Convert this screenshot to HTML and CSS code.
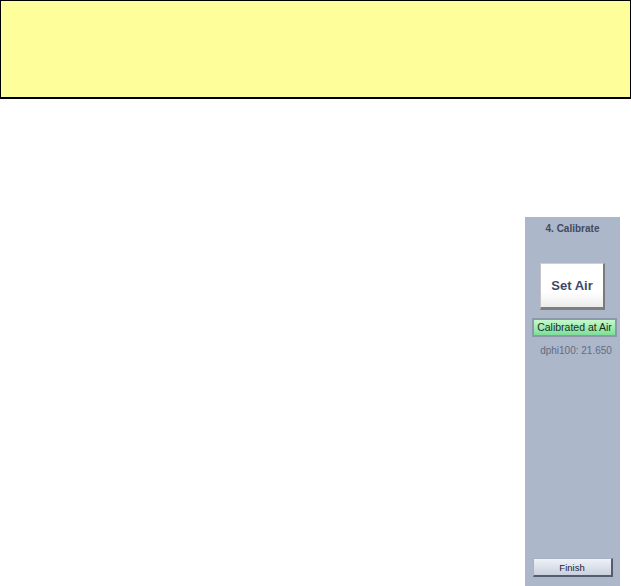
FILE: index.html
```html
<!DOCTYPE html>
<html lang="en">
<head>
    <meta charset="UTF-8">
    <title>Calibrate</title>
    <link rel="stylesheet" href="styles.css">
</head>
<body>
    <div class="notice"></div>
    <div class="side">
        <div class="panel">
            <p class="panel-title">4. Calibrate</p>
            <button class="set-air">Set Air</button>
            <div class="status">Calibrated at Air</div>
            <p class="reading">dphi100: 21.650</p>
            <button class="finish">Finish</button>
        </div>
    </div>
</body>
</html>
```

FILE: styles.css
```css
*{
    margin:0;
    padding:0;
    box-sizing: border-box;
}
body{
    background-color: white;
    font-family: "Liberation Sans", Arial, sans-serif;
}
.notice{
    width: 631px;
    height: 99px;
    background-color: #fefe9a;
    border: 1px solid black;
    border-bottom-width: 2px;
}
.side{
    display: flex;
    justify-content: flex-end;
    padding-right: 11px;
    margin-top: 118px;
}
.panel{
    width: 95px;
    height: 369px;
    background-color: #adb7ca;
    display: flex;
    flex-direction: column;
    align-items: center;
}
.panel-title{
    font-size: 10px;
    font-weight: bold;
    color: #414a5e;
    line-height: 13px;
    margin-top: 5px;
}
.set-air{
    width: 65px;
    height: 47px;
    margin-top: 28px;
    font-family: "Liberation Sans", Arial, sans-serif;
    font-size: 13px;
    font-weight: bold;
    color: #3b4a68;
    background: linear-gradient(to bottom, #ffffff 65%, #ececec);
    border-top: 1px solid #d0d0d0;
    border-left: 1px solid #c4c4c4;
    border-right: 2px solid #7a7a7a;
    border-bottom: 3px solid #7e7e7e;
}
.status{
    align-self: flex-start;
    margin-left: 7px;
    margin-top: 8px;
    width: 85px;
    height: 19px;
    border: 2px solid #8f98aa;
    background: linear-gradient(to bottom, #c6f8cb, #7ddf98);
    font-size: 10.5px;
    line-height: 15px;
    text-align: center;
    color: #1d2a22;
}
.reading{
    margin-top: 7px;
    margin-left: 7px;
    font-size: 10px;
    line-height: 13px;
    color: #646b80;
}
.finish{
    margin-top: auto;
    margin-bottom: 9px;
    width: 80px;
    height: 19px;
    font-family: "Liberation Sans", Arial, sans-serif;
    font-size: 9.5px;
    color: #1c2230;
    background: linear-gradient(to bottom, #eef1f7, #cad1de);
    border-top: 1px solid #aab2c2;
    border-left: 1px solid #aab2c2;
    border-right: 2px solid #555d6c;
    border-bottom: 2px solid #555d6c;
}
```
